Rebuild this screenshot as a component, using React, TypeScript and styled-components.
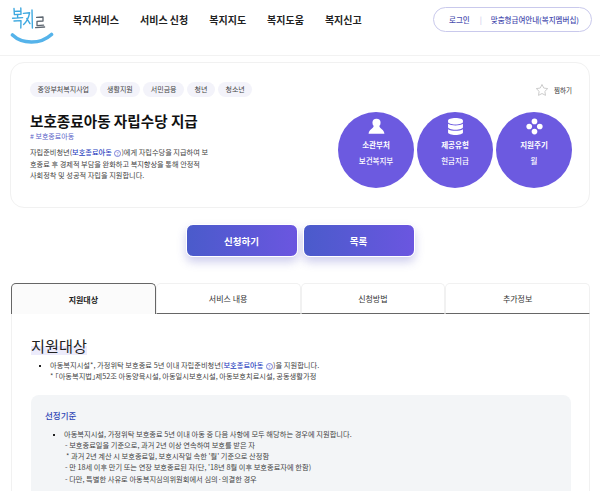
import styled, { createGlobalStyle } from 'styled-components';
import { FaDatabase } from 'react-icons/fa';

const GlobalStyle = createGlobalStyle`
  html, body {
    margin: 0;
    padding: 0;
    background: #fff;
  }
  body {
    font-family: "Noto Sans CJK KR", "Noto Sans", sans-serif;
    color: #333;
    height: 491px;
    overflow: hidden;
  }
  * {
    box-sizing: border-box;
  }
`;

const Page = styled.div`
  width: 600px;
  height: 491px;
  overflow: hidden;
`;

const Header = styled.header`
  height: 56px;
  padding: 5px 8px 0 10px;
  display: flex;
  align-items: flex-start;
  border-bottom: 1px solid #f2f2f2;
`;

const Logo = styled.svg`
  width: 46px;
  height: 42px;
  flex: none;
`;

const Nav = styled.nav`
  display: flex;
  gap: 21px;
  margin-left: 17px;
  padding-top: 7px;
  font-size: 10px;
  line-height: 16px;
  font-weight: 700;
  color: #222;
`;

const UserBox = styled.div`
  margin: 2px 0 0 auto;
  width: 159px;
  height: 25px;
  border: 1px solid #c9c9ec;
  border-radius: 13px;
  display: flex;
  align-items: center;
  padding-left: 15px;
  font-size: 7.5px;
  font-weight: 500;
  color: #4b4fb0;
  white-space: nowrap;
`;

const UserSep = styled.span`
  margin: 0 9px 0 10px;
  color: #c9c9ec;
`;

const Summary = styled.section`
  margin: 6px 10px 0 10px;
  height: 146px;
  border: 1px solid #f1f1f1;
  border-radius: 14px;
  padding: 19px 17px 0 19px;
  display: flex;
  justify-content: space-between;
`;

const SummaryText = styled.div`
  width: 180px;
`;

const Chips = styled.div`
  display: flex;
  gap: 3px;
  white-space: nowrap;
`;

const Chip = styled.span`
  height: 15px;
  line-height: 15px;
  padding: 0 7.5px;
  border-radius: 8px;
  background: #f3f3fa;
  font-size: 7px;
  color: #444;
`;

const Title = styled.h1`
  margin: 14px 0 0;
  font-size: 14.6px;
  line-height: 20px;
  font-weight: 700;
  color: #111;
  white-space: nowrap;
`;

const HashTag = styled.div`
  margin-top: 1px;
  font-size: 7px;
  line-height: 9px;
  color: #5a63c8;
`;

const Desc = styled.p`
  margin: 6px 0 0;
  font-size: 7.2px;
  line-height: 11.7px;
  color: #444;
  white-space: nowrap;
`;

const Term = styled.b`
  font-weight: 500;
  color: #2b3fc0;
`;

const HelpMark = styled.span`
  display: inline-block;
  width: 7px;
  height: 7px;
  margin: 0 0.5px;
  border: 0.6px solid #7a80d8;
  border-radius: 50%;
  font-size: 5px;
  line-height: 6px;
  text-align: center;
  vertical-align: -0.5px;
  color: #7a80d8;
`;

const SummarySide = styled.div`
  display: flex;
  flex-direction: column;
  align-items: flex-end;
`;

const Fav = styled.div`
  display: flex;
  align-items: center;
  gap: 5px;
  height: 15px;
  font-size: 6.5px;
  color: #333;
`;

const StarIcon = styled.svg`
  width: 14px;
  height: 14px;
`;

const Circles = styled.div`
  display: flex;
  gap: 3px;
  margin-top: 15px;
`;

const Circle = styled.div`
  width: 76px;
  height: 76px;
  border-radius: 50%;
  background: #6c5ae0;
  color: #fff;
  display: flex;
  flex-direction: column;
  align-items: center;
  padding-top: 6px;
  text-align: center;
  svg {
    width: 17px;
    height: 17px;
    display: block;
  }
`;

const CircleLabel = styled.div`
  margin-top: 4px;
  font-size: 7.5px;
  line-height: 11px;
  font-weight: 700;
`;

const CircleValue = styled.div`
  margin-top: 5px;
  font-size: 7.5px;
  line-height: 11px;
  font-weight: 500;
`;

const Actions = styled.div`
  margin-top: 16px;
  display: flex;
  justify-content: center;
  gap: 5px;
`;

const ActionButton = styled.button`
  width: 112px;
  height: 33px;
  border: 1px solid #fff;
  border-radius: 7px;
  background: linear-gradient(90deg, #4a5bcb, #6b56e0);
  box-shadow: 0 5px 10px rgba(80, 80, 190, 0.28);
  color: #fff;
  font-family: inherit;
  font-size: 9.5px;
  font-weight: 700;
`;

const Tabs = styled.div`
  margin: 26px 10px 0 11px;
  display: grid;
  grid-template-columns: repeat(4, 1fr);
`;

const Tab = styled.div<{ $active?: boolean }>`
  height: 31px;
  display: flex;
  align-items: center;
  justify-content: center;
  font-size: 8px;
  font-weight: ${({ $active }) => ($active ? 700 : 400)};
  color: ${({ $active }) => ($active ? '#222' : '#333')};
  background: ${({ $active }) => ($active ? '#fbfbfb' : '#fff')};
  border: 1px solid ${({ $active }) => ($active ? '#666' : '#f1f1f1')};
  border-bottom: ${({ $active }) => ($active ? '0' : '1px solid #666')};
  border-radius: 5px 5px 0 0;
`;

const Panel = styled.main`
  margin: 0 10px 0 11px;
  padding: 19px 18px 0 19px;
  height: 180px;
  border-left: 1px solid #f1f1f1;
  border-right: 1px solid #f1f1f1;
`;

const Heading = styled.h2`
  display: inline-block;
  margin: 0;
  font-size: 15.2px;
  line-height: 20px;
  font-weight: 400;
  color: #222;
  background: linear-gradient(transparent 55%, #ecebfb 55%);
`;

const BulletList = styled.ul`
  margin: 3px 0 0;
  padding: 0 0 0 19px;
  list-style: square;
  font-size: 7.25px;
  line-height: 11.3px;
  color: #444;
  white-space: nowrap;
  li::marker {
    font-size: 6px;
    color: #222;
  }
`;

const SubLine = styled.div<{ $indent?: number }>`
  padding-left: ${({ $indent }) => $indent ?? 0}px;
`;

const InfoBox = styled.div`
  margin-top: 12px;
  background: #f3f5f7;
  border-radius: 8px;
  height: 120px;
  padding: 13px 14px 0;
`;

const InfoTitle = styled.h3`
  margin: 0;
  font-size: 8.5px;
  line-height: 14px;
  font-weight: 500;
  color: #2e44b5;
`;

const InfoList = styled(BulletList)`
  margin-top: 7px;
`;

function UserIcon() {
  return (
    <svg viewBox="0 0 18 18" fill="currentColor">
      <circle cx="9" cy="5" r="4.3" />
      <path d="M6 8.6 C5.6 11.4 1 12.2 0.6 16.8 L17.4 16.8 C17 12.2 12.4 11.4 12 8.6 Z" />
    </svg>
  );
}

function DotsIcon() {
  return (
    <svg viewBox="0 0 18 18" fill="currentColor">
      <circle cx="9" cy="3.6" r="3" />
      <circle cx="9" cy="14.4" r="3" />
      <circle cx="3.4" cy="9" r="3" />
      <circle cx="14.6" cy="9" r="3" />
    </svg>
  );
}

export default function App() {
  return (
    <Page>
      <GlobalStyle />
      <Header>
        <Logo viewBox="0 0 46 42" fill="none" strokeLinecap="round" strokeLinejoin="round">
          <g stroke="#3fa9e0" strokeWidth="1.4">
            <path d="M4 3.5 L4.4 9.6 L11 9.2 L10.8 3 M4.2 6.4 L10.8 6" />
            <path d="M2.6 13.2 L12.6 12.6 M7.6 9.6 L7.6 12.8" />
            <path d="M4 16 L11 15.6 L10.8 23" />
            <path d="M13.4 8.4 L19.6 7.8 C18.8 12 16.8 16.4 13.6 19.6 M16.8 13.6 L20 18.6" />
            <path d="M22 5 L22.4 23" />
          </g>
          <path d="M26.6 12.4 L33 12 L33 16 L27 16.4 L27 20.6 L33.6 20.2 M25.6 22.6 L34.6 22" stroke="#5d6670" strokeWidth="1.3" />
          <path d="M2.5 30 C12 39 30 40 41.5 29.5" stroke="#55b3ea" strokeWidth="3.6" />
        </Logo>
        <Nav>
          <span>복지서비스</span>
          <span>서비스 신청</span>
          <span>복지지도</span>
          <span>복지도움</span>
          <span>복지신고</span>
        </Nav>
        <UserBox>
          <span>로그인</span>
          <UserSep>|</UserSep>
          <span>맞춤형급여안내(복지멤버십)</span>
        </UserBox>
      </Header>

      <Summary>
        <SummaryText>
          <Chips>
            <Chip>중앙부처복지사업</Chip>
            <Chip>생활지원</Chip>
            <Chip>서민금융</Chip>
            <Chip>청년</Chip>
            <Chip>청소년</Chip>
          </Chips>
          <Title>보호종료아동 자립수당 지급</Title>
          <HashTag># 보호종료아동</HashTag>
          <Desc>
            자립준비청년(<Term>보호종료아동</Term> <HelpMark>?</HelpMark>)에게 자립수당을 지급하여 보
            <br />
            호종료 후 경제적 부담을 완화하고 복지향상을 통해 안정적
            <br />
            사회정착 및 성공적 자립을 지원합니다.
          </Desc>
        </SummaryText>
        <SummarySide>
          <Fav>
            <StarIcon viewBox="0 0 24 24" fill="none" stroke="#c8c8c8" strokeWidth="1.6" strokeLinejoin="round">
              <path d="M12 2.5 L15 8.6 L21.8 9.6 L16.9 14.4 L18 21.2 L12 18 L6 21.2 L7.1 14.4 L2.2 9.6 L9 8.6 Z" />
            </StarIcon>
            <span>찜하기</span>
          </Fav>
          <Circles>
            <Circle>
              <UserIcon />
              <CircleLabel>소관부처</CircleLabel>
              <CircleValue>보건복지부</CircleValue>
            </Circle>
            <Circle>
              <FaDatabase />
              <CircleLabel>제공유형</CircleLabel>
              <CircleValue>현금지급</CircleValue>
            </Circle>
            <Circle>
              <DotsIcon />
              <CircleLabel>지원주기</CircleLabel>
              <CircleValue>월</CircleValue>
            </Circle>
          </Circles>
        </SummarySide>
      </Summary>

      <Actions>
        <ActionButton>신청하기</ActionButton>
        <ActionButton>목록</ActionButton>
      </Actions>

      <Tabs>
        <Tab $active>지원대상</Tab>
        <Tab>서비스 내용</Tab>
        <Tab>신청방법</Tab>
        <Tab>추가정보</Tab>
      </Tabs>

      <Panel>
        <Heading>지원대상</Heading>
        <BulletList>
          <li>
            아동복지시설*, 가정위탁 보호종료 5년 이내 자립준비청년(<Term>보호종료아동</Term> <HelpMark>?</HelpMark>)을 지원합니다.
            <SubLine>* ｢아동복지법｣제52조 아동양육시설, 아동일시보호시설, 아동보호치료시설, 공동생활가정</SubLine>
          </li>
        </BulletList>
        <InfoBox>
          <InfoTitle>선정기준</InfoTitle>
          <InfoList>
            <li>
              아동복지시설, 가정위탁 보호종료 5년 이내 아동 중 다음 사항에 모두 해당하는 경우에 지원합니다.
              <SubLine $indent={1}>- 보호종료일을 기준으로, 과거 2년 이상 연속하여 보호를 받은 자</SubLine>
              <SubLine $indent={2}>* 과거 2년 계산 시 보호종료일, 보호시작일 속한 '월' 기준으로 산정함</SubLine>
              <SubLine $indent={1}>- 만 18세 이후 만기 또는 연장 보호종료된 자(단, '18년 8월 이후 보호종료자에 한함)</SubLine>
              <SubLine $indent={1}>- 다만, 특별한 사유로 아동복지심의위원회에서 심의·의결한 경우</SubLine>
            </li>
          </InfoList>
        </InfoBox>
      </Panel>
    </Page>
  );
}
